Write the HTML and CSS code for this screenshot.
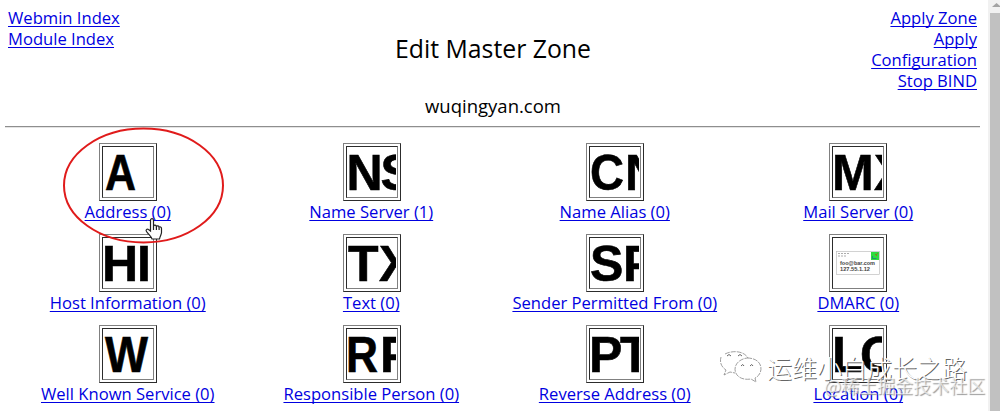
FILE: index.html
```
<!DOCTYPE html>
<html lang="en">
<head>
  <meta charset="UTF-8">
  <title>Edit Master Zone</title>
  <link rel="stylesheet" href="styles.css">
</head>
<body>
  <div class="page">
    <header class="header">
      <div class="links">
        <a href="#">Webmin Index</a><br>
        <a href="#">Module Index</a>
      </div>
      <div class="title">
        <h1>Edit Master Zone</h1>
        <p>wuqingyan.com</p>
      </div>
      <div class="links right">
        <a href="#">Apply Zone</a><br>
        <a href="#">Apply<br>Configuration</a><br>
        <a href="#">Stop BIND</a>
      </div>
    </header>
    <hr>
    <div class="records">
      <div class="record">
        <div class="icon"><div><svg viewBox="0 0 48 48"><text x="1" y="42" textLength="31" lengthAdjust="spacingAndGlyphs">A</text></svg></div></div>
        <a href="#">Address (0)</a>
      </div>
      <div class="record">
        <div class="icon"><div><svg viewBox="0 0 48 48"><text x="-1.6" y="42">N</text><text x="32.5" y="42">S</text></svg></div></div>
        <a href="#">Name Server (1)</a>
      </div>
      <div class="record">
        <div class="icon"><div><svg viewBox="0 0 48 48"><text x="-1" y="42" textLength="34" lengthAdjust="spacingAndGlyphs">C</text><text x="34" y="42">N</text></svg></div></div>
        <a href="#">Name Alias (0)</a>
      </div>
      <div class="record">
        <div class="icon"><div><svg viewBox="0 0 48 48"><text x="-2" y="42">M</text><text x="40" y="42">X</text></svg></div></div>
        <a href="#">Mail Server (0)</a>
      </div>
      <div class="record">
        <div class="icon"><div><svg viewBox="0 0 48 48"><text x="-2" y="42">H</text><text x="33" y="42">I</text></svg></div></div>
        <a href="#">Host Information (0)</a>
      </div>
      <div class="record">
        <div class="icon"><div><svg viewBox="0 0 48 48"><text x="0" y="42">T</text><text x="31" y="42">X</text></svg></div></div>
        <a href="#">Text (0)</a>
      </div>
      <div class="record">
        <div class="icon"><div><svg viewBox="0 0 48 48"><text x="-1" y="42">S</text><text x="32" y="42">P</text></svg></div></div>
        <a href="#">Sender Permitted From (0)</a>
      </div>
      <div class="record">
        <div class="icon"><div>
          <svg viewBox="0 0 48 48">
            <rect x="2.5" y="12.5" width="43" height="23" fill="#fff" stroke="#b5b5b5"/>
            <path d="M4 14.5h12M4 17h8" stroke="#777" stroke-dasharray="2 1"/>
            <rect x="37" y="13" width="8" height="8" fill="#2fdc3c" stroke="none"/>
            <path d="M41 15l2 2M44 14l-2 2" stroke="#c33a12"/>
            <path d="M38.500 17v2.500h4" stroke="#155a9a" fill="none"/>
            <text class="mail" x="6" y="25.5" textLength="35" lengthAdjust="spacingAndGlyphs">foo@bar.com</text>
            <text class="mail" x="6" y="31.5" textLength="30" lengthAdjust="spacingAndGlyphs">127.55.1.12</text>
          </svg>
        </div></div>
        <a href="#">DMARC (0)</a>
      </div>
      <div class="record">
        <div class="icon"><div><svg viewBox="0 0 48 48"><text x="1" y="42" textLength="43" lengthAdjust="spacingAndGlyphs">W</text></svg></div></div>
        <a href="#">Well Known Service (0)</a>
      </div>
      <div class="record">
        <div class="icon"><div><svg viewBox="0 0 48 48"><text x="-2" y="42" textLength="32" lengthAdjust="spacingAndGlyphs">R</text><text x="32" y="42">P</text></svg></div></div>
        <a href="#">Responsible Person (0)</a>
      </div>
      <div class="record">
        <div class="icon"><div><svg viewBox="0 0 48 48"><text x="-2" y="42">P</text><text x="29" y="42">T</text></svg></div></div>
        <a href="#">Reverse Address (0)</a>
      </div>
      <div class="record">
        <div class="icon"><div><svg viewBox="0 0 48 48"><text x="-2" y="42">L</text><text x="26" y="42">O</text></svg></div></div>
        <a href="#">Location (0)</a>
      </div>
    </div>
  </div>
  <div class="scrollbar">
    <svg width="12" height="13"><path d="M4 7l4.5-4 4.5 4z" fill="#a3a3a3"/></svg>
    <div class="thumb"></div>
  </div>

  <svg class="circle" width="164" height="120"><ellipse cx="81.5" cy="59.5" rx="79.5" ry="57"/></svg>
  <svg class="cursor" width="20" height="24" viewBox="0 0 20 24">
    <path d="M6.500 14V3.500c0-2.500 3-2.500 3 0V9c.5-1.300 2.700-1 2.900.4.600-1 2.500-.7 2.700.7.900-.7 2.400-.2 2.400 1.400v4c0 2-1.500 3.500-2 6.500H8c-.5-2.500-3.500-4.500-5.500-7.500-1.300-2 .8-3 2-2z"/>
    <path d="M9.500 9v4M12.400 9.500V13M15.100 10.500V13"/>
  </svg>
  <div class="watermark">
    <svg width="44" height="32" viewBox="0 0 44 32">
      <path class="bubble" d="M2 6C0 13 4 17 7 19L5 24l6-3 5 1"/>
      <path class="bubble" d="M6 3C14-1 25 0 29 7"/>
      <path class="bubble" d="M28 7c17 0 17 16 8 20l1 4-5-3C13 31 10 10 28 7z"/>
      <g class="eyes"><path d="M8 5q2-3 4 0"/><path d="M19 5q2-3 4 0"/><path d="M22 15q2-3 3 0"/><path d="M31 15q2-3 3 0"/></g>
    </svg>
    <span>运维小白成长之路</span>
  </div>
  <div class="community">@稀土掘金技术社区</div>
</body>
</html>
```
FILE: styles.css
```
body {
  display: flex;
  justify-content: space-between;
  margin: 0;
  height: 411px;
  overflow: hidden;
  background: #fff;
  color: #000;
  font-family: "Open Sans", "Noto Sans", sans-serif;
  font-size: 16.6px;
  line-height: 21px;
}
a {
  color: #0000e0;
  text-decoration: underline;
  text-decoration-thickness: 1px;
  text-underline-offset: 2px;
  text-decoration-skip-ink: none;
}
.page {
  width: 975px;
  padding-left: 5px;
}
.header {
  display: grid;
  grid-template-columns: 146px 1fr 146px;
  height: 119px;
  padding: 7px 3px 0;
}
.right {
  text-align: right;
}
.title {
  padding-left: 1px;
  text-align: center;
}
h1 {
  margin: 24px 0 0;
  font-size: 24.8px;
  font-weight: normal;
  line-height: 34px;
}
.title p {
  margin: 28px 0 0;
  font-size: 18.5px;
  line-height: 26px;
}
hr {
  margin: 0;
  border: 0;
  border-top: 1px solid #8e8e8e;
  border-bottom: 1px solid #e4e4e4;
}
.records {
  display: grid;
  grid-template-columns: repeat(4, 243.5px);
  grid-auto-rows: 91px;
  padding: 15px 0 0 1px;
}
.record {
  display: flex;
  flex-direction: column;
  align-items: center;
  white-space: nowrap;
}
.icon {
  padding: 2px;
  border: 1px solid;
  border-color: #808080 #2c2c2c #2c2c2c #808080;
}
.record:nth-child(4n + 2) .icon {
  margin-left: 1px;
}
.icon div {
  padding: 1px;
  border: 1px solid;
  border-color: #2c2c2c #808080 #808080 #2c2c2c;
}
.icon svg {
  display: block;
  width: 48px;
  height: 48px;
  overflow: hidden;
  font-family: "Liberation Sans", Arial, sans-serif;
  font-size: 50px;
  font-weight: bold;
  stroke: #000;
  stroke-width: 0.6;
}
.icon .mail {
  fill: #444;
  stroke: none;
  font-size: 6px;
}
.scrollbar {
  display: flex;
  flex-direction: column;
  width: 12px;
  background: #f1f1f1;
}
.thumb {
  flex: 1;
  margin-left: 2px;
  background: #c1c1c1;
}
.circle {
  position: absolute;
  left: 62px;
  top: 126px;
  fill: none;
  stroke: #e01b1b;
  stroke-width: 2;
}
.cursor {
  position: absolute;
  left: 144px;
  top: 217px;
  fill: #fff;
  stroke: #222;
  stroke-width: 1.2;
}
.watermark {
  position: absolute;
  left: 719px;
  top: 351px;
  display: flex;
  align-items: center;
  gap: 4px;
  color: #fff;
  font: 300 25px/32px "Noto Sans CJK SC", sans-serif;
  text-shadow: 1px 1px 0 #666;
}
.bubble {
  fill: none;
  stroke: #888;
  stroke-width: 0.8;
  stroke-dasharray: 5 1;
}
.eyes {
  fill: none;
  stroke: #666;
}
.community {
  position: absolute;
  left: 824px;
  top: 373px;
  color: rgba(255, 255, 255, 0.65);
  font: 18px/24px "Noto Sans CJK SC", sans-serif;
  text-shadow: 1px 1px 1px #999;
}
```
